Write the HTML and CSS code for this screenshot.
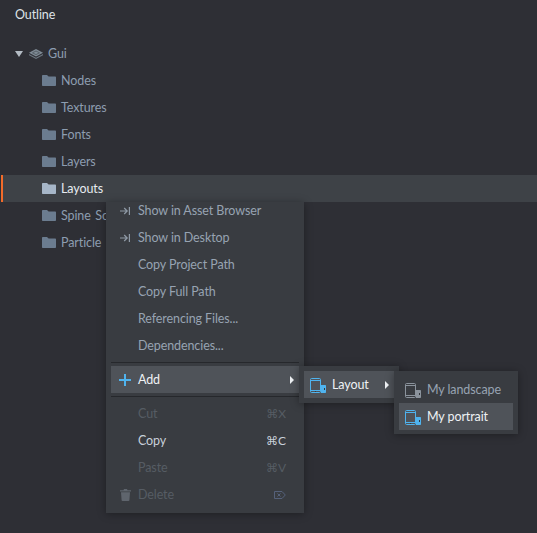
FILE: index.html
```html
<!DOCTYPE html>
<html lang="en">
<head>
    <meta charset="UTF-8">
    <title>Outline</title>
    <link rel="stylesheet" href="styles.css">
</head>
<body>
    <svg class="defs" width="0" height="0">
        <symbol id="folder" viewBox="0 0 14 11">
            <path fill="currentColor" d="M0 1C0 .4.400 0 1 0h4l1.600 1.500H13c.6 0 1 .4 1 1V10c0 .6-.4 1-1 1H1c-.6 0-1-.4-1-1z"/>
        </symbol>
        <symbol id="device" viewBox="0 0 16 15">
            <path fill="none" stroke="currentColor" d="M1.500.5h8c.6 0 1 .4 1 1v12c0 .6-.4 1-1 1h-8c-.6 0-1-.4-1-1v-12c0-.6.400-1 1-1zM.5 2.500h10M.5 12.500h10"/>
            <path fill="currentColor" d="M11 7h4c.6 0 1 .4 1 1v6c0 .6-.4 1-1 1h-4z"/>
            <path fill="#33363b" d="M14 10h1v2h-1zM5 13h1v1H5z"/>
        </symbol>
        <symbol id="jump" viewBox="0 0 10 8">
            <path fill="none" stroke="currentColor" stroke-width="1.200" d="M0 4h7M4.200 1l3 3-3 3M9.400 0v8"/>
        </symbol>
    </svg>

    <div class="app">
        <h1 class="title">Outline</h1>

        <ul class="tree">
            <li class="row root">
                <span class="caret"></span>
                <svg class="stack" viewBox="0 0 14 10" width="14" height="10">
                    <path fill="#7f8b95" d="M7 0 14 3.800 7 7.600 0 3.800z"/>
                    <path fill="none" stroke="#4d555d" stroke-width=".8" d="M3.500 3.800 7 2l3.500 1.800L7 5.600z"/>
                    <path fill="#6c7780" d="M0 5 7 8.800 14 5V6.200L7 10 0 6.200z"/>
                </svg>
                <span>Gui</span>
            </li>
            <li class="row"><svg class="folder"><use href="#folder"/></svg><span>Nodes</span></li>
            <li class="row"><svg class="folder"><use href="#folder"/></svg><span>Textures</span></li>
            <li class="row"><svg class="folder"><use href="#folder"/></svg><span>Fonts</span></li>
            <li class="row"><svg class="folder"><use href="#folder"/></svg><span>Layers</span></li>
            <li class="row selected"><svg class="folder"><use href="#folder"/></svg><span>Layouts</span></li>
            <li class="row"><svg class="folder"><use href="#folder"/></svg><span>Spine Scenes</span></li>
            <li class="row"><svg class="folder"><use href="#folder"/></svg><span>Particle FX</span></li>
        </ul>

        <div class="menu">
            <ul class="menu-list first">
                <li class="item"><span class="slot"><svg class="jump"><use href="#jump"/></svg></span><span class="label">Show in Asset Browser</span></li>
                <li class="item"><span class="slot"><svg class="jump"><use href="#jump"/></svg></span><span class="label">Show in Desktop</span></li>
                <li class="item"><span class="slot"></span><span class="label">Copy Project Path</span></li>
                <li class="item"><span class="slot"></span><span class="label">Copy Full Path</span></li>
                <li class="item"><span class="slot"></span><span class="label">Referencing Files...</span></li>
                <li class="item"><span class="slot"></span><span class="label">Dependencies...</span></li>
            </ul>
            <div class="sep"></div>
            <ul class="menu-list">
                <li class="item active">
                    <span class="slot">
                        <svg class="plus" viewBox="0 0 12 12" width="12" height="12"><path fill="#4fb3ee" d="M5 0h2v5h5v2H7v5H5V7H0V5h5z"/></svg>
                    </span>
                    <span class="label">Add</span>
                    <span class="arrow"></span>

                    <div class="menu sub-layout">
                        <ul class="menu-list">
                            <li class="item active">
                                <svg class="device blue"><use href="#device"/></svg>
                                <span class="label">Layout</span>
                                <span class="arrow"></span>
                            </li>
                        </ul>
                        <div class="menu sub-names">
                            <ul class="menu-list">
                                <li class="item"><svg class="device"><use href="#device"/></svg><span class="label">My landscape</span></li>
                                <li class="item active"><svg class="device blue"><use href="#device"/></svg><span class="label">My portrait</span></li>
                            </ul>
                        </div>
                    </div>
                </li>
            </ul>
            <div class="sep"></div>
            <ul class="menu-list">
                <li class="item off"><span class="slot"></span><span class="label">Cut</span><span class="key">⌘X</span></li>
                <li class="item"><span class="slot"></span><span class="label bright">Copy</span><span class="key bright">⌘C</span></li>
                <li class="item off"><span class="slot"></span><span class="label">Paste</span><span class="key">⌘V</span></li>
                <li class="item off">
                    <span class="slot">
                        <svg class="trash" viewBox="0 0 11 12" width="11" height="12"><path fill="currentColor" d="M4 0h3l.5 1.200H11v1.300H0V1.200h3.500zM1 3.300h9l-.6 8c0 .4-.4.700-.8.700H2.400c-.4 0-.8-.3-.8-.7z"/></svg>
                    </span>
                    <span class="label">Delete</span>
                    <svg class="del-key" viewBox="0 0 12 8" width="12" height="8"><path fill="none" stroke="currentColor" d="M.5.500h7.500L11.300 4 8 7.500H.5zM3.500 2.500l3 3M6.500 2.500l-3 3"/></svg>
                </li>
            </ul>
        </div>
    </div>
</body>
</html>
```

FILE: styles.css
```css
* {
    box-sizing: border-box;
}
html, body {
    margin: 0;
    padding: 0;
}
body {
    font-family: Lato, "Noto Sans", sans-serif;
    font-size: 12.5px;
    letter-spacing: -0.1px;
    background-color: #2e2f35;
    color: #8d9db0;
}
ul {
    list-style: none;
    margin: 0;
    padding: 0;
}
.defs {
    position: absolute;
}
.app {
    position: relative;
    height: 533px;
    overflow: hidden;
}
.title {
    margin: 0;
    height: 40px;
    padding: 6px 0 0 15px;
    font-size: 12.5px;
    font-weight: 400;
    line-height: 18px;
    color: #dfe3e8;
}

/* tree */
.row {
    display: flex;
    align-items: center;
    height: 27px;
    padding-left: 42px;
    word-spacing: 1.5px;
}
.row span {
    padding-bottom: 1px;
}
.row .caret {
    padding-bottom: 0;
}
.folder {
    width: 14px;
    height: 11px;
    margin-right: 5px;
    color: #6b7c8f;
}
.root {
    padding-left: 15px;
}
.caret {
    width: 0;
    height: 0;
    margin-right: 6px;
    border-left: 4px solid transparent;
    border-right: 4px solid transparent;
    border-top: 6px solid #b4bcc4;
}
.stack {
    margin-right: 5px;
}
.selected {
    margin-left: 1px;
    padding-left: 39px;
    border-left: 2px solid #f26b2a;
    background-color: #3e4247;
    color: #e6ebf0;
}
.selected .folder {
    color: #a6b6c8;
}

/* menus */
.menu {
    position: absolute;
    left: 106px;
    top: 202px;
    width: 198px;
    height: 311px;
    background-color: #393c41;
    box-shadow: 0 1px 8px rgba(0, 0, 0, 0.35);
}
.menu-list {
    padding: 0 5px;
}
.menu-list.first {
    margin-top: -5px;
}
.item {
    position: relative;
    display: flex;
    align-items: center;
    height: 27px;
    color: #97a3b2;
}
.slot {
    display: flex;
    align-items: center;
    flex: none;
    width: 27px;
    padding-left: 8px;
}
.label {
    flex: 1;
    padding-bottom: 1px;
}
.bright {
    color: #c8d0d9;
}
.jump {
    width: 10px;
    height: 8px;
    margin-left: 1px;
    color: #8f9aa6;
}
.sep {
    height: 1px;
    margin: 3px 5px;
    background-color: #26282c;
}
.active {
    background-color: #4f5359;
    color: #eef1f4;
}
.arrow {
    width: 0;
    height: 0;
    margin-right: 5px;
    border-top: 4px solid transparent;
    border-bottom: 4px solid transparent;
    border-left: 4px solid #eef1f4;
}
.off {
    color: #565c64;
}
.key {
    margin-right: 13px;
    padding-bottom: 1px;
    font-family: Lato, "DejaVu Sans", sans-serif;
    font-size: 12px;
    letter-spacing: 0;
}
.trash {
    margin-left: 1px;
    color: #5f656d;
}
.del-key {
    margin-right: 13px;
    color: #55617a;
}
.sub-layout {
    left: 188px;
    top: 0;
    width: 100px;
    height: 37px;
    padding-top: 5px;
}
.sub-names {
    left: 95px;
    top: 5px;
    width: 124px;
    height: 63px;
    padding-top: 5px;
}
.device {
    flex: none;
    width: 16px;
    height: 15px;
    margin: 2px 6px 0;
    color: #8b939c;
}
.blue {
    color: #4fb3ee;
}
```
